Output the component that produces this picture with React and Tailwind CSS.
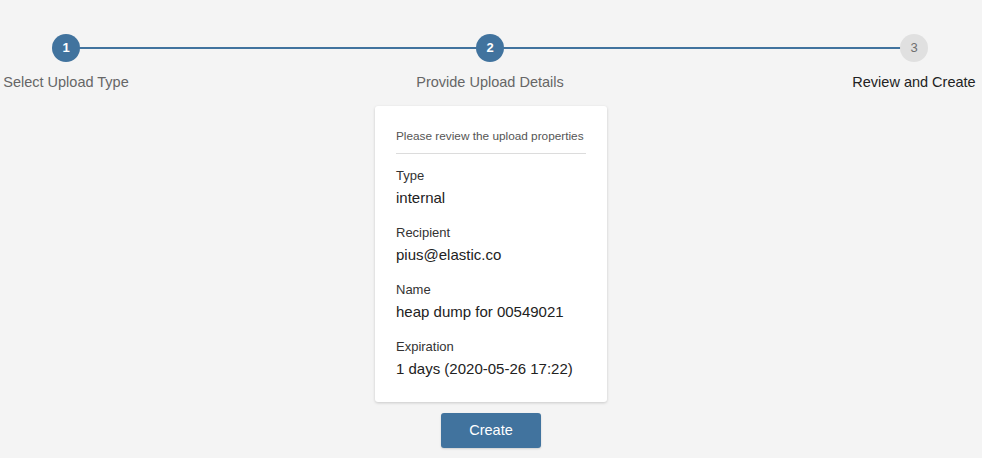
const steps = [
  { n: 1, label: "Select Upload Type", done: true },
  { n: 2, label: "Provide Upload Details", done: true },
  { n: 3, label: "Review and Create", done: false },
];

const fields = [
  { label: "Type", value: "internal" },
  { label: "Recipient", value: "pius@elastic.co" },
  { label: "Name", value: "heap dump for 00549021" },
  { label: "Expiration", value: "1 days (2020-05-26 17:22)" },
];

function Stepper() {
  return (
    <div className="relative flex justify-between pt-[34px] pr-[2px]">
      <div className="absolute left-[66px] right-[70px] top-[47px] h-[2px] bg-[#41739e]" />
      {steps.map((s) => (
        <div key={s.n} className="relative flex w-[132px] flex-col items-center">
          <div
            className={`grid h-[28px] w-[28px] place-items-center rounded-full text-[13px] font-bold ${
              s.done ? "bg-[#41739e] text-white" : "bg-[#e0e0e0] font-normal text-[#6f6f6f]"
            }`}
          >
            {s.n}
          </div>
          <div
            className={`mt-[11px] whitespace-nowrap text-[14.5px] leading-[18px] ${
              s.done ? "text-[#666]" : "text-[#222]"
            }`}
          >
            {s.label}
          </div>
        </div>
      ))}
    </div>
  );
}

export default function App() {
  return (
    <div className="h-[458px] w-full overflow-hidden bg-[#f4f4f4] font-['Liberation_Sans',Arial,sans-serif]">
      <Stepper />
      <div className="flex flex-col items-center">
        <div className="mt-[15px] w-[232px] rounded-[3px] bg-white px-[21px] pt-[22px] pb-[24px] shadow-[0_1px_3px_rgba(0,0,0,0.18)]">
          <div className="whitespace-nowrap border-b border-[#dcdcdc] pb-[9px] text-[11.8px] leading-[16px] text-[#555]">
            Please review the upload properties
          </div>
          <div className="mt-[14px] flex flex-col gap-[18px]">
            {fields.map((f) => (
              <div key={f.label} className="flex flex-col">
                <span className="text-[13px] leading-[16px] text-[#333]">{f.label}</span>
                <span className="mt-[5px] text-[15px] leading-[18px] text-[#222]">{f.value}</span>
              </div>
            ))}
          </div>
        </div>
        <button
          type="button"
          className="mt-[11px] h-[35px] w-[100px] rounded-[3px] bg-[#41739e] text-[14.5px] text-white shadow-[0_1px_2px_rgba(0,0,0,0.15)]"
        >
          Create
        </button>
      </div>
    </div>
  );
}
